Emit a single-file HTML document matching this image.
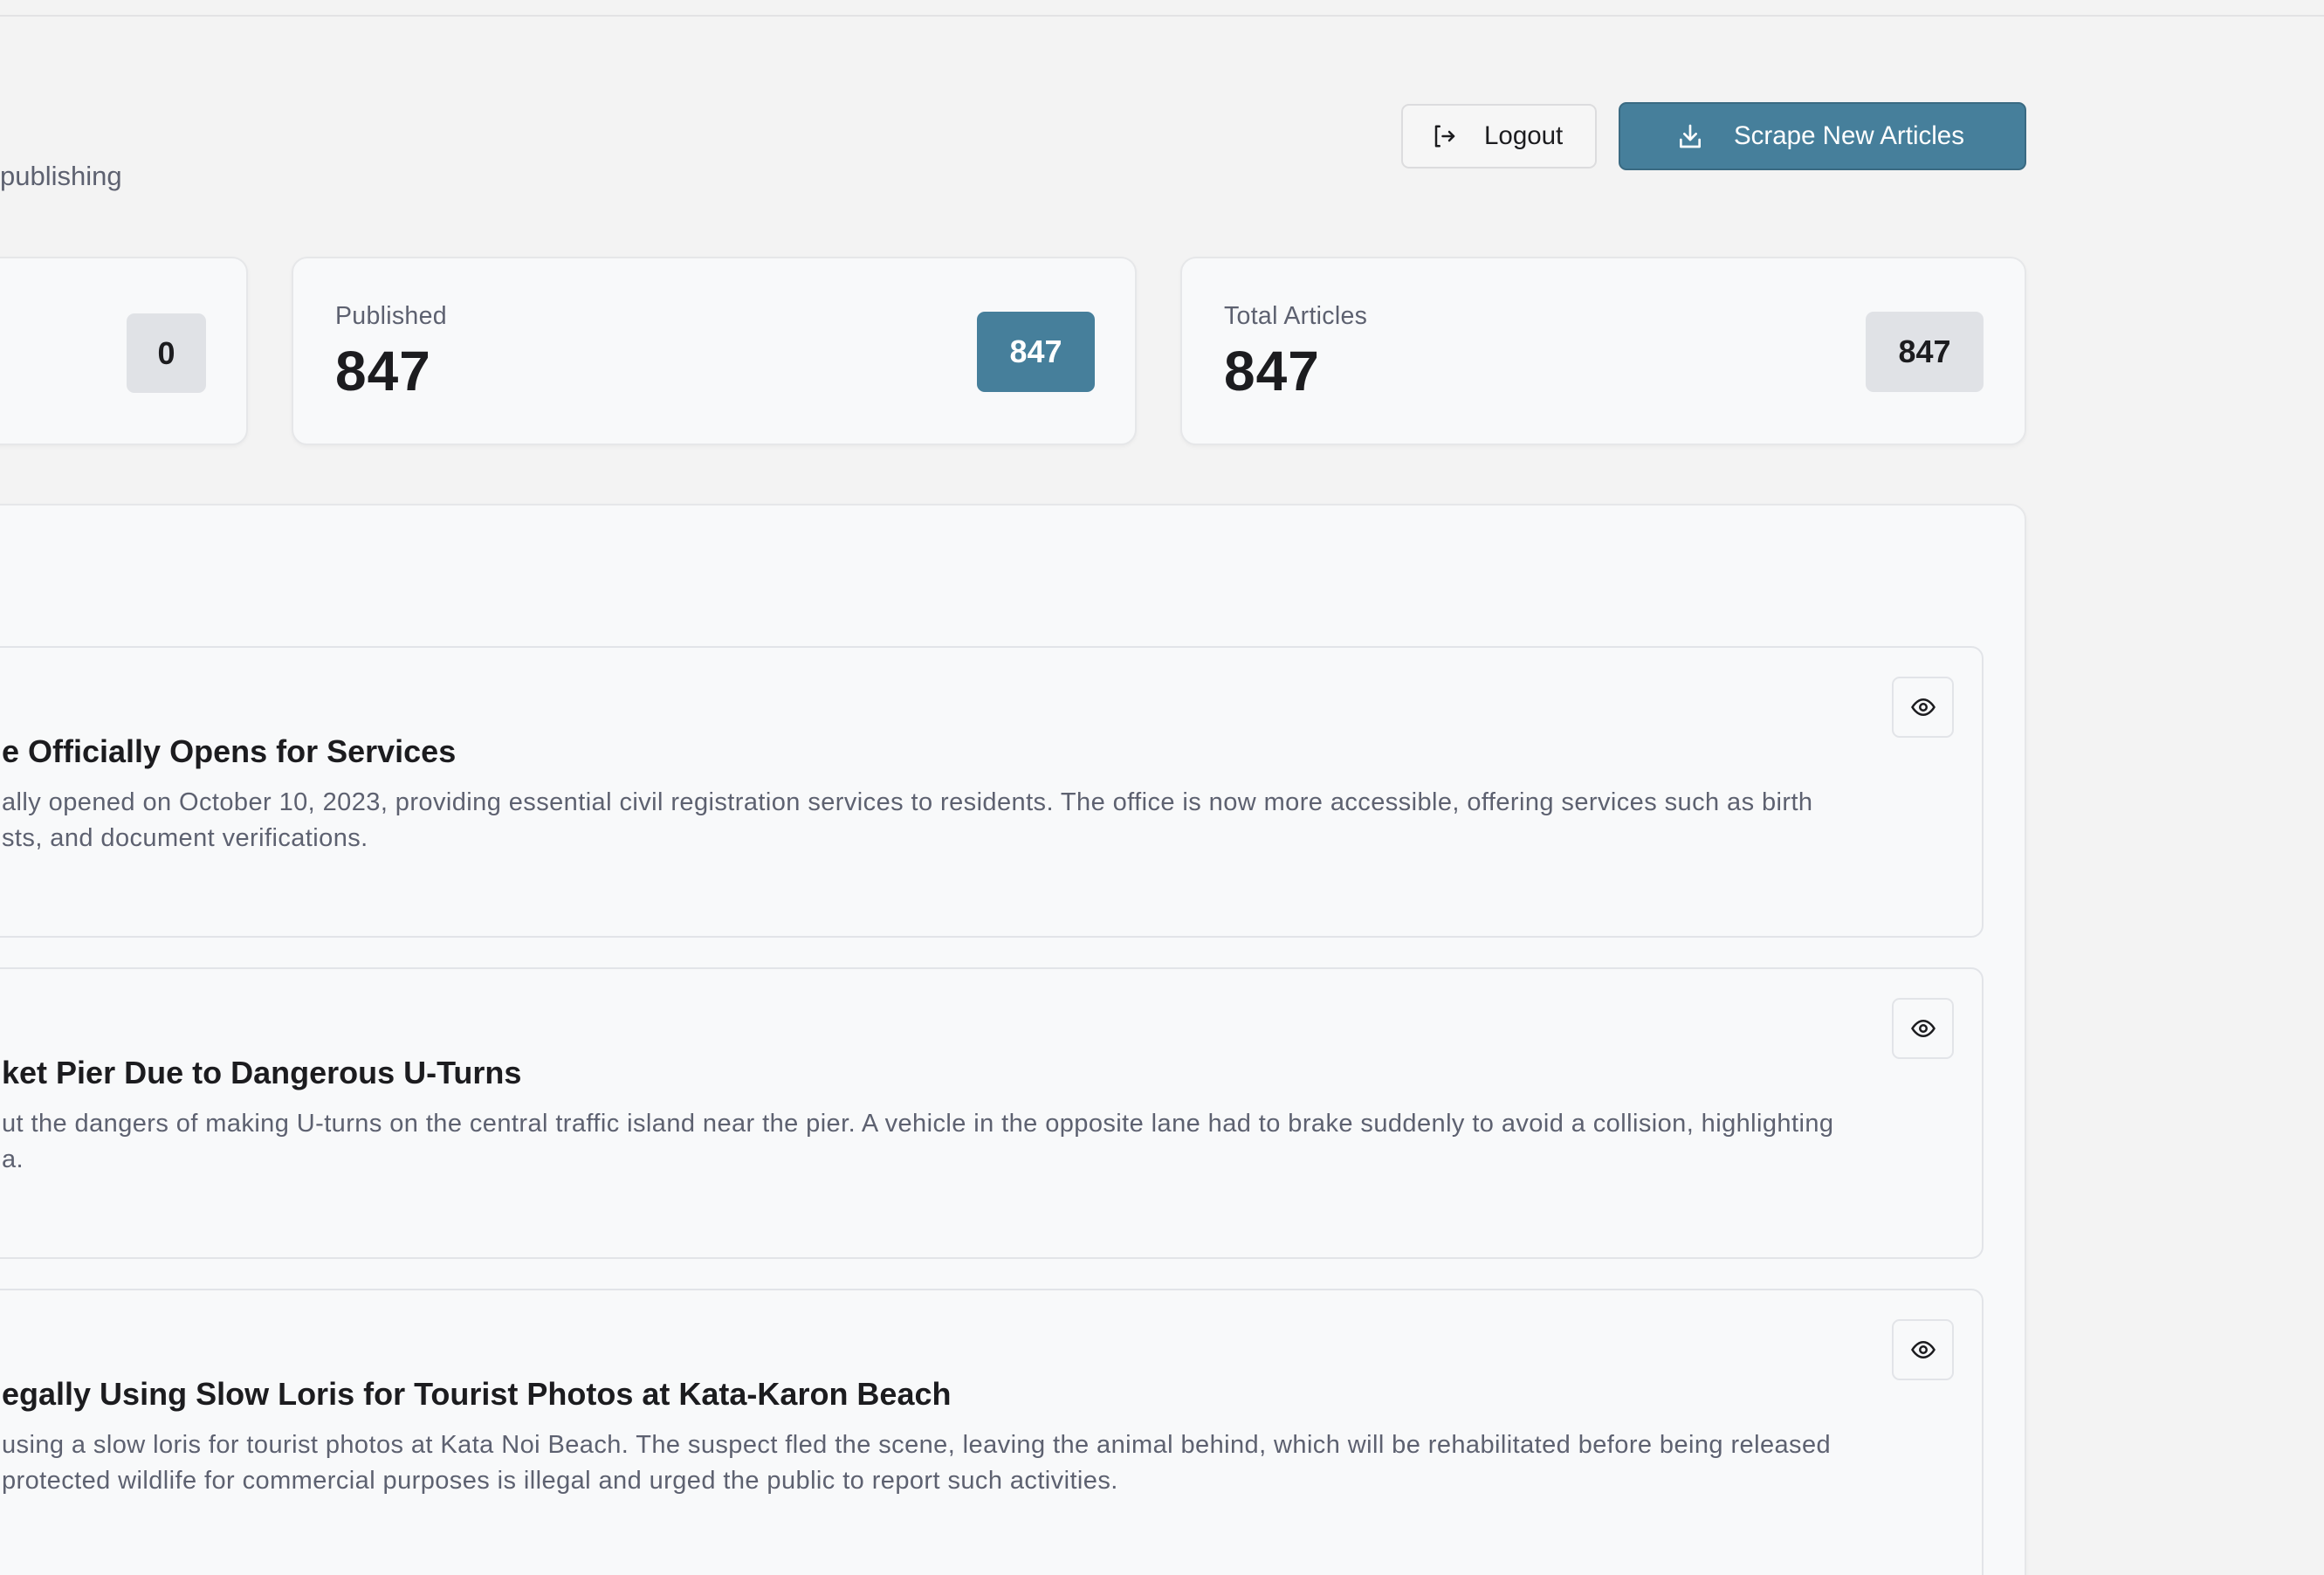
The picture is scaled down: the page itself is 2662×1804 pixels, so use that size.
<!DOCTYPE html>
<html><head><meta charset="utf-8"><style>
*{margin:0;padding:0;box-sizing:border-box}
html,body{width:2662px;height:1804px;overflow:hidden;background:#f3f3f3}
body{font-family:"Liberation Sans",sans-serif;color:#1c1c1f}
#wrap{position:relative;width:2662px;height:1804px;overflow:hidden}
.abs{position:absolute}
.topline{left:0;top:0;width:2662px;height:19px;border-bottom:2px solid #e2e2e4;background:#f3f3f3}
.btn{position:absolute;display:flex;align-items:center;border-radius:9px;font-size:29.5px}
.card{position:absolute;background:#f8f9fa;border:2px solid #e6e7e9;border-radius:18px;box-shadow:0 2px 4px rgba(0,0,0,0.04)}
.lbl{position:absolute;font-size:28.5px;color:#5d6170;letter-spacing:0.3px}
.num{position:absolute;font-size:64px;font-weight:bold;color:#1c1c1f;letter-spacing:1px}
.badge{position:absolute;border-radius:9px;display:flex;align-items:center;justify-content:center;font-size:36px;font-weight:bold}
.art{position:absolute;left:-20px;width:2292px;height:334px;background:#f8f9fa;border:2px solid #e2e4e8;border-radius:14px}
.eye{position:absolute;right:32px;top:33px;width:71px;height:70px;border:2px solid #e2e4e8;border-radius:9px;display:flex;align-items:center;justify-content:center;background:#f8f9fa}
.ttl{position:absolute;left:20px;top:98px;font-size:36px;font-weight:bold;white-space:nowrap;color:#1c1c1f}
.desc{position:absolute;left:20px;top:157px;font-size:29px;line-height:41px;color:#5d6170;white-space:nowrap;letter-spacing:0.42px}
</style></head><body><div id="wrap">
<div class="abs topline"></div>
<div class="abs" style="left:0;top:184px;font-size:31px;color:#5d6170">publishing</div>

<div class="btn" style="left:1605px;top:119px;width:224px;height:74px;border:2px solid #dcdcde;background:#f6f6f6;color:#1c1c1f">
<svg style="margin-left:33px" width="30" height="30" viewBox="0 0 24 24" fill="none" stroke="#1c1c1f" stroke-width="2" stroke-linecap="round" stroke-linejoin="round"><path d="M7 3H4v18h3"/><path d="M10 12h10"/><path d="M16 8l4 4-4 4"/></svg>
<span style="margin-left:30px">Logout</span></div>

<div class="btn" style="left:1854px;top:117px;width:467px;height:78px;background:#467f9b;border:2px solid #3a6a82;color:#fff">
<svg style="margin-left:64px" width="32" height="32" viewBox="0 0 24 24" fill="none" stroke="#fff" stroke-width="2" stroke-linecap="round" stroke-linejoin="round"><path d="M12 3v12"/><path d="M7 10l5 5 5-5"/><path d="M4 15v6h16v-6"/></svg>
<span style="margin-left:34px">Scrape New Articles</span></div>

<div class="card" style="left:-40px;top:294px;width:324px;height:216px">
<div class="badge" style="left:183px;top:63px;width:91px;height:91px;background:#e0e2e6;color:#1c1c1f">0</div></div>

<div class="card" style="left:334px;top:294px;width:968px;height:216px">
<div class="lbl" style="left:48px;top:50px">Published</div>
<div class="num" style="left:48px;top:92px">847</div>
<div class="badge" style="left:783px;top:61px;width:135px;height:92px;background:#467f9b;color:#fff">847</div></div>

<div class="card" style="left:1352px;top:294px;width:969px;height:216px">
<div class="lbl" style="left:48px;top:50px">Total Articles</div>
<div class="num" style="left:48px;top:92px">847</div>
<div class="badge" style="left:783px;top:61px;width:135px;height:92px;background:#e0e2e6;color:#1c1c1f">847</div></div>

<div class="card" style="left:-40px;top:577px;width:2361px;height:1300px"></div>

<div class="art" style="top:740px">
<div class="eye"><svg width="30" height="30" viewBox="0 0 24 24" fill="none" stroke="#1c1c1f" stroke-width="2"><path d="M2 12s4-7 10-7 10 7 10 7-4 7-10 7S2 12 2 12z"/><circle cx="12" cy="12" r="3"/></svg></div>
<div class="ttl">e Officially Opens for Services</div>
<div class="desc">ally opened on October 10, 2023, providing essential civil registration services to residents. The office is now more accessible, offering services such as birth<br>sts, and document verifications.</div></div>

<div class="art" style="top:1108px">
<div class="eye"><svg width="30" height="30" viewBox="0 0 24 24" fill="none" stroke="#1c1c1f" stroke-width="2"><path d="M2 12s4-7 10-7 10 7 10 7-4 7-10 7S2 12 2 12z"/><circle cx="12" cy="12" r="3"/></svg></div>
<div class="ttl">ket Pier Due to Dangerous U-Turns</div>
<div class="desc">ut the dangers of making U-turns on the central traffic island near the pier. A vehicle in the opposite lane had to brake suddenly to avoid a collision, highlighting<br>a.</div></div>

<div class="art" style="top:1476px;height:400px">
<div class="eye"><svg width="30" height="30" viewBox="0 0 24 24" fill="none" stroke="#1c1c1f" stroke-width="2"><path d="M2 12s4-7 10-7 10 7 10 7-4 7-10 7S2 12 2 12z"/><circle cx="12" cy="12" r="3"/></svg></div>
<div class="ttl">egally Using Slow Loris for Tourist Photos at Kata-Karon Beach</div>
<div class="desc">using a slow loris for tourist photos at Kata Noi Beach. The suspect fled the scene, leaving the animal behind, which will be rehabilitated before being released<br>protected wildlife for commercial purposes is illegal and urged the public to report such activities.</div></div>
</div></body></html>
